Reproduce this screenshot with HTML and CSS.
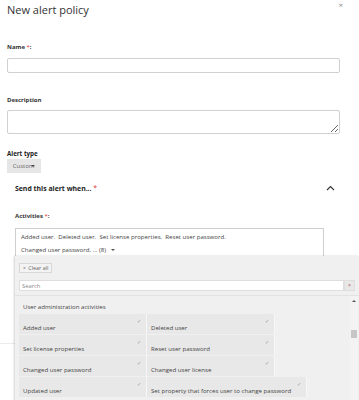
FILE: index.html
```html
<!DOCTYPE html>
<html lang="en">
<head>
    <meta charset="UTF-8">
    <meta name="viewport" content="width=device-width, initial-scale=1.0">
    <title>New alert policy</title>
    <link rel="stylesheet" href="styles.css">
</head>
<body>
    <div class="dialog">
        <div class="dialog-head">
            <h1 class="title">New alert policy</h1>
            <button class="close-btn">×</button>
        </div>

        <div class="field field-name">
            <label class="label">Name <span class="req">*</span>:</label>
            <input class="text-input" type="text">
        </div>

        <div class="field field-desc">
            <label class="label">Description</label>
            <textarea class="text-area"></textarea>
        </div>

        <div class="field field-type">
            <label class="label label-dark">Alert type</label>
            <button class="type-btn">Custom<span class="type-caret"></span></button>
        </div>

        <div class="section">
            <div class="section-head">
                <h2 class="section-title">Send this alert when... <span class="req">*</span></h2>
                <svg class="chevron" width="9" height="6" viewBox="0 0 9 6">
                    <path d="M1 5 L4.5 1.5 L8 5" fill="none" stroke="#333" stroke-width="1.1"/>
                </svg>
            </div>

            <label class="label activities-label">Activities <span class="req">*</span>:</label>
            <div class="picker">
                <div class="picker-value">
                    <div class="value-line">Added user.&nbsp; Deleted user.&nbsp; Set license properties.&nbsp; Reset user password.</div>
                    <div class="value-line">Changed user password, ... (8) <span class="value-caret"></span></div>
                </div>

                <div class="picker-panel">
                    <div class="panel-top">
                        <button class="clear-btn"><span class="clear-x">×</span> Clear all</button>
                        <div class="search-row">
                            <input class="search-input" type="text" placeholder="Search">
                            <button class="search-clear">×</button>
                        </div>
                    </div>
                    <div class="panel-list">
                        <div class="list-body">
                            <div class="group-title">User administration activities</div>
                            <div class="tile-row">
                                <div class="tile"><span class="tick">✓</span>Added user</div>
                                <div class="tile"><span class="tick">✓</span>Deleted user</div>
                            </div>
                            <div class="tile-row">
                                <div class="tile"><span class="tick">✓</span>Set license properties</div>
                                <div class="tile"><span class="tick">✓</span>Reset user password</div>
                            </div>
                            <div class="tile-row">
                                <div class="tile"><span class="tick">✓</span>Changed user password</div>
                                <div class="tile"><span class="tick">✓</span>Changed user license</div>
                            </div>
                            <div class="tile-row">
                                <div class="tile"><span class="tick">✓</span>Updated user</div>
                                <div class="tile tile-wide"><span class="tick">✓</span>Set property that forces user to change password</div>
                            </div>
                        </div>
                        <div class="scrollbar">
                            <div class="scroll-up"></div>
                            <div class="scroll-thumb"></div>
                        </div>
                    </div>
                </div>
            </div>
            <div class="form-divider"></div>
        </div>
    </div>
</body>
</html>
```

FILE: styles.css
```css
* {
    box-sizing: border-box;
    margin: 0;
    padding: 0;
}

body {
    font-family: "Open Sans", "Noto Sans", sans-serif;
    background: #fff;
    color: #333;
    overflow: hidden;
    height: 400px;
}

.dialog {
    padding: 0 19px 0 7px;
    position: relative;
}

.dialog-head {
    display: flex;
    justify-content: space-between;
    align-items: flex-start;
    height: 43px;
}

.title {
    font-size: 11px;
    font-weight: 400;
    line-height: 14px;
    margin-top: 3px;
    color: #333;
}

.close-btn {
    background: none;
    border: none;
    color: #888;
    font-family: inherit;
    font-size: 8px;
    line-height: 8px;
    height: 8px;
    margin: 1px -3px 0 0;
}

.label {
    display: block;
    font-size: 6px;
    font-weight: 700;
    color: #333;
    line-height: 8px;
}

.label-dark {
    color: #222;
    font-size: 6.2px;
}

.req {
    color: #e03030;
    font-weight: 400;
}

.field-name .label {
    margin-bottom: 7px;
}

.text-input {
    display: block;
    width: 333px;
    height: 15px;
    border: 1px solid #d0d0d0;
    border-radius: 2px;
    background: #fff;
}

.field-desc {
    margin-top: 23px;
}

.field-desc .label {
    margin-bottom: 6px;
}

.text-area {
    display: block;
    width: 333px;
    height: 24px;
    border: 1px solid #d0d0d0;
    border-radius: 2px;
    resize: vertical;
    font-family: inherit;
}

.field-type {
    margin-top: 16px;
}

.type-btn {
    display: block;
    margin-top: 1px;
    width: 34px;
    height: 14px;
    border: none;
    background: #e6e6e6;
    color: #666;
    font-family: inherit;
    font-size: 6px;
    line-height: 14px;
}

.type-caret {
    display: inline-block;
    width: 0;
    height: 0;
    margin-left: -3px;
    vertical-align: 1px;
    border-left: 2px solid transparent;
    border-right: 2px solid transparent;
    border-top: 2px solid #444;
}

.section {
    padding-left: 8px;
}

.section-head {
    display: flex;
    justify-content: space-between;
    align-items: center;
    height: 14px;
    margin-top: 8px;
    padding-right: 5px;
}

.section-title {
    font-size: 6.9px;
    font-weight: 700;
    color: #222;
}

.activities-label {
    margin-top: 17px;
}

.picker {
    position: relative;
    margin-top: 8px;
}

.picker-value {
    width: 309px;
    height: 29px;
    border: 1px solid #cfcfcf;
    padding: 1px 5px 0;
}

.value-line {
    font-size: 6.1px;
    color: #444;
    line-height: 13px;
}

.value-caret {
    display: inline-block;
    width: 0;
    height: 0;
    margin-left: 3px;
    vertical-align: 1px;
    border-left: 2px solid transparent;
    border-right: 2px solid transparent;
    border-top: 2px solid #555;
}

.picker-panel {
    position: absolute;
    top: 28px;
    left: 0;
    width: 344px;
    height: 150px;
    background: #f0f0f0;
    box-shadow: -1px 0 2px rgba(0, 0, 0, 0.18);
}

.panel-top {
    padding: 7px 4px 4px;
    border-bottom: 1px solid #e2e2e2;
}

.clear-btn {
    display: block;
    height: 10px;
    padding: 0 3px;
    border: 1px solid #d8d8d8;
    background: #f3f3f3;
    color: #666;
    font-family: inherit;
    font-size: 5.4px;
    line-height: 8px;
}

.clear-x {
    font-size: 5px;
    margin-right: 1px;
}

.search-row {
    display: flex;
    margin-top: 7px;
    height: 11px;
}

.search-input {
    width: 325px;
    height: 11px;
    border: 1px solid #dedede;
    background: #fff;
    padding: 0 2px;
    font-family: inherit;
    font-size: 5.8px;
}

.search-input::placeholder {
    color: #8a8a8a;
}

.search-clear {
    width: 11px;
    height: 11px;
    border: 1px solid #dedede;
    background: #e8e8e8;
    color: #b06060;
    font-size: 5px;
    line-height: 9px;
}

.panel-list {
    display: flex;
}

.list-body {
    flex: 1;
    padding: 0 4px;
}

.group-title {
    font-size: 6.1px;
    color: #444;
    height: 18px;
    line-height: 14px;
    padding: 4px 0 0 4px;
}

.tile-row {
    display: flex;
    margin-bottom: 1px;
}

.tile {
    position: relative;
    width: 128px;
    height: 20px;
    background: #e8e8e8;
    border-right: 1px solid #f6f6f6;
    padding: 9px 4px 0;
    font-size: 6.1px;
    line-height: 10px;
    color: #444;
}

.tile-wide {
    width: 160px;
}

.tick {
    position: absolute;
    top: 2px;
    right: 5px;
    font-size: 4.5px;
    color: #999;
}

.scrollbar {
    width: 8px;
    height: 110px;
    margin-right: 1px;
    background: #f3f3f3;
    padding-top: 4px;
}

.scroll-up {
    width: 0;
    height: 0;
    margin: 0 auto;
    border-left: 2px solid transparent;
    border-right: 2px solid transparent;
    border-bottom: 2px solid #555;
}

.scroll-thumb {
    margin: 28px auto 0;
    width: 6px;
    height: 8px;
    background: #c6c6c6;
}

.form-divider {
    height: 1px;
    margin: 86px 0 0 -15px;
    background: #ececec;
}
```
